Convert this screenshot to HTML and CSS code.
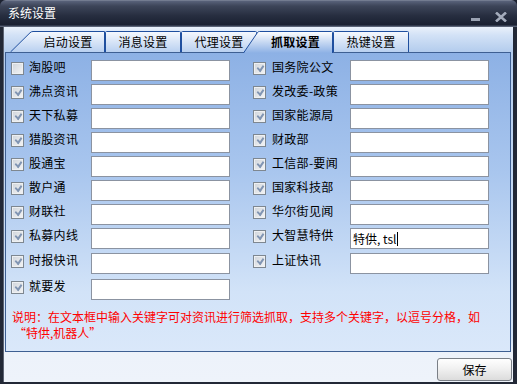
FILE: index.html
```html
<!DOCTYPE html>
<html>
<head>
<meta charset="utf-8">
<link rel="stylesheet" href="styles.css">
</head>
<body>
<div class="window">
  <div class="titlebar">
    <span class="title">系统设置</span>
    <div class="controls">
      <svg class="btn-min" width="9" height="4" viewBox="0 0 9 4"><rect x="0" y="0" width="9" height="3" fill="#9aa2b2"/></svg>
      <svg class="btn-close" width="12" height="10" viewBox="0 0 12 10"><path d="M1 0.5 L11 9.5 M11 0.5 L1 9.5" stroke="#a3abbb" stroke-width="2.6"/></svg>
    </div>
  </div>
  <div class="content">
    <div class="tabs">
      <div class="tab tab-first">
        <svg class="tab-bg" viewBox="0 0 95 21" preserveAspectRatio="none"><defs><linearGradient id="gi" x1="0" y1="0" x2="0" y2="1"><stop offset="0" stop-color="#f6f9fe"/><stop offset="1" stop-color="#b9d0f0"/></linearGradient></defs><path d="M0.5 21 L20 1.8 Q21.3 0.5 23 0.5 H94.5 V21" fill="url(#gi)" stroke="#1f4f9f" stroke-width="1"/></svg>
        <span class="tab-label">启动设置</span>
      </div>
      <div class="tab">
        <svg class="tab-bg" viewBox="0 0 76 21" preserveAspectRatio="none"><path d="M0.5 21 V1.5 Q0.5 0.5 1.5 0.5 H74.5 Q75.5 0.5 75.5 1.5 V21" fill="url(#gi)" stroke="#1f4f9f" stroke-width="1"/></svg>
        <span class="tab-label">消息设置</span>
      </div>
      <div class="tab tab-third">
        <svg class="tab-bg" viewBox="0 0 76 21" preserveAspectRatio="none"><path d="M0.5 21 V1.5 Q0.5 0.5 1.5 0.5 H74.5 Q75.5 0.5 75.5 1.5 V21" fill="url(#gi)" stroke="#1f4f9f" stroke-width="1"/></svg>
        <span class="tab-label">代理设置</span>
      </div>
      <div class="tab tab-active">
        <svg class="tab-bg" viewBox="0 0 90 22" preserveAspectRatio="none"><defs><linearGradient id="ga" x1="0" y1="0" x2="0" y2="1"><stop offset="0" stop-color="#ffffff"/><stop offset="1" stop-color="#8db1e5"/></linearGradient></defs><path d="M0.5 22 L14.5 1.5 Q15.2 0.5 16.5 0.5 H88.5 Q89.5 0.5 89.5 1.5 V22 Z" fill="url(#ga)"/><path d="M0.5 22 L14.5 1.5 Q15.2 0.5 16.5 0.5 H88.5 Q89.5 0.5 89.5 1.5 V22" fill="none" stroke="#1f4f9f" stroke-width="1"/></svg>
        <span class="tab-label">抓取设置</span>
      </div>
      <div class="tab">
        <svg class="tab-bg" viewBox="0 0 76 21" preserveAspectRatio="none"><path d="M0.5 21 V1.5 Q0.5 0.5 1.5 0.5 H74.5 Q75.5 0.5 75.5 1.5 V21" fill="url(#gi)" stroke="#1f4f9f" stroke-width="1"/></svg>
        <span class="tab-label">热键设置</span>
      </div>
    </div>
    <div class="panel">
      <div class="cols">
        <div class="col col-left">
          <div class="row"><span class="cb"></span><span class="lbl">淘股吧</span><span class="inp"></span></div>
          <div class="row"><span class="cb on"></span><span class="lbl">沸点资讯</span><span class="inp"></span></div>
          <div class="row"><span class="cb on"></span><span class="lbl">天下私募</span><span class="inp"></span></div>
          <div class="row"><span class="cb on"></span><span class="lbl">猎股资讯</span><span class="inp"></span></div>
          <div class="row"><span class="cb on"></span><span class="lbl">股通宝</span><span class="inp"></span></div>
          <div class="row"><span class="cb on"></span><span class="lbl">散户通</span><span class="inp"></span></div>
          <div class="row"><span class="cb on"></span><span class="lbl">财联社</span><span class="inp"></span></div>
          <div class="row"><span class="cb on"></span><span class="lbl">私募内线</span><span class="inp"></span></div>
          <div class="row r9"><span class="cb on"></span><span class="lbl">时报快讯</span><span class="inp"></span></div>
          <div class="row r10"><span class="cb on"></span><span class="lbl">就要发</span><span class="inp"></span></div>
        </div>
        <div class="col col-right">
          <div class="row"><span class="cb on"></span><span class="lbl">国务院公文</span><span class="inp"></span></div>
          <div class="row"><span class="cb on"></span><span class="lbl">发改委-政策</span><span class="inp"></span></div>
          <div class="row"><span class="cb on"></span><span class="lbl">国家能源局</span><span class="inp"></span></div>
          <div class="row"><span class="cb on"></span><span class="lbl">财政部</span><span class="inp"></span></div>
          <div class="row"><span class="cb on"></span><span class="lbl">工信部-要闻</span><span class="inp"></span></div>
          <div class="row"><span class="cb on"></span><span class="lbl">国家科技部</span><span class="inp"></span></div>
          <div class="row"><span class="cb on"></span><span class="lbl">华尔街见闻</span><span class="inp"></span></div>
          <div class="row"><span class="cb on"></span><span class="lbl">大智慧特供</span><span class="inp filled">特供, tsl<span class="caret"></span></span></div>
          <div class="row r9"><span class="cb on"></span><span class="lbl">上证快讯</span><span class="inp"></span></div>
        </div>
      </div>
      <p class="note">说明：在文本框中输入关键字可对资讯进行筛选抓取，支持多个关键字，以逗号分格，如<br><span class="note2">“特供,机器人”</span></p>
    </div>
    <div class="footer">
      <button class="save">保存</button>
    </div>
  </div>
</div>
</body>
</html>
```

FILE: styles.css
```css
html, body {
  margin: 0;
  padding: 0;
  width: 517px;
  height: 384px;
  overflow: hidden;
  background: #1c2230;
}

body {
  font-family: "Noto Sans CJK SC", "DejaVu Sans", sans-serif;
  font-size: 12px;
}

.window {
  width: 517px;
  height: 384px;
  box-sizing: border-box;
  display: flex;
  flex-direction: column;
  background: #222836;
  border-radius: 6px 6px 0 0;
  overflow: hidden;
}

.titlebar {
  height: 27px;
  flex: none;
  display: flex;
  align-items: flex-start;
  justify-content: space-between;
  background: linear-gradient(to bottom, #8d95a6 0px, #59627a 1px, #3d4559 6px, #262d3f 16px, #1a2031 25px, #4a5368 26px, #6a7386 27px);
  box-sizing: border-box;
  padding: 0 10px 0 8px;
}

.title {
  color: #ffffff;
  line-height: 14px;
  margin-top: 6px;
  font-size: 12px;
}

.controls {
  display: flex;
  align-items: flex-start;
  gap: 15px;
  margin-top: 12px;
}

.btn-min {
  margin-top: 6px;
  display: block;
}

.btn-close {
  display: block;
}

.content {
  flex: 1;
  margin: 0 4px 2px 3px;
  display: flex;
  flex-direction: column;
  background: linear-gradient(to bottom, #eaf1fb 0px, #d3e2f6 8px, #b3cced 25px, #b9d1f0 60px, #d4e4f8 310px, #edf2fa 326px, #eef3fa 355px);
  box-shadow: inset 1px 0 0 #5b6272;
}

.tabs {
  height: 21px;
  margin-top: 4px;
  display: flex;
  align-items: flex-end;
  padding-left: 7px;
  position: relative;
  z-index: 2;
}

.tab {
  position: relative;
  height: 21px;
  width: 76px;
  flex: none;
  display: flex;
  align-items: center;
  justify-content: center;
  color: #000;
}

.tab-first {
  width: 95px;
  padding-left: 21px;
  box-sizing: border-box;
}

.tab-third {
  width: 76px;
}

.tab-active {
  width: 90px;
  height: 22px;
  margin-left: -14px;
  margin-bottom: -1px;
  padding-left: 15px;
  padding-bottom: 1px;
  box-sizing: border-box;
  z-index: 3;
  font-weight: bold;
}

.tab-bg {
  position: absolute;
  left: 0;
  top: 0;
  width: 100%;
  height: 100%;
}

.tab-label {
  position: relative;
  line-height: 14px;
  letter-spacing: 0.3px;
}

.panel {
  height: 300px;
  margin: 0 2px 0 2px;
  box-sizing: border-box;
  border: 1px solid #3e5f92;
  background: linear-gradient(to bottom, #8db1e5 0%, #a9c6ee 40%, #d2e3f8 80%, #dae8fa 100%);
  padding: 7px 0 0 5px;
  position: relative;
  z-index: 1;
}

.cols {
  display: flex;
  gap: 23px;
}

.col {
  display: flex;
  flex-direction: column;
  gap: 3px;
}

.row {
  display: flex;
  align-items: flex-start;
  height: 21px;
}

.r9 {
  margin-top: 1px;
}

.r10 {
  margin-top: 2px;
}

.cb {
  width: 13px;
  height: 13px;
  box-sizing: border-box;
  flex: none;
  margin-top: 2px;
  margin-right: 5px;
  border: 1px solid #7e8790;
  background: linear-gradient(135deg, #cfd4da 0%, #e6e8eb 60%, #f3f4f5 100%);
  box-shadow: inset 0 0 0 1px #eef0f2;
  position: relative;
}

.cb.on::after {
  content: "";
  position: absolute;
  left: 3px;
  top: 2px;
  width: 5px;
  height: 3px;
  border-left: 2px solid #8195b3;
  border-bottom: 2px solid #8195b3;
  transform: rotate(-55deg) skewX(-10deg);
  transform-origin: center;
}

.lbl {
  color: #000;
  line-height: 14px;
  white-space: nowrap;
  flex: none;
  letter-spacing: 0.3px;
}

.col-left .lbl {
  width: 62px;
}

.col-right .lbl {
  width: 78px;
  margin-left: 1px;
}

.col-right .cb {
  margin-right: 5px;
}

.inp {
  width: 139px;
  height: 21px;
  box-sizing: border-box;
  flex: none;
  background: #ffffff;
  border: 1px solid #8b93a1;
  display: flex;
  align-items: center;
  padding-left: 2px;
  color: #000;
  font-size: 12px;
  line-height: 14px;
}

.caret {
  display: inline-block;
  width: 1px;
  height: 14px;
  background: #000;
  margin-left: 1px;
}

.note {
  margin: 9px 0 0 1px;
  color: #ff0000;
  line-height: 16px;
  letter-spacing: 0;
  font-size: 12px;
  white-space: nowrap;
}

.note2 {
  margin-left: 2px;
}

.footer {
  display: flex;
  justify-content: flex-end;
  padding: 6px 1px 0 0;
}

.save {
  width: 75px;
  height: 23px;
  box-sizing: border-box;
  border: 1px solid #7a7f86;
  border-radius: 3px;
  background: linear-gradient(to bottom, #ffffff 0%, #f1f1f1 45%, #dcdcdc 100%);
  font-family: "Noto Sans CJK SC", "DejaVu Sans", sans-serif;
  font-size: 12px;
  color: #000;
  padding: 0;
  line-height: 14px;
}
```
